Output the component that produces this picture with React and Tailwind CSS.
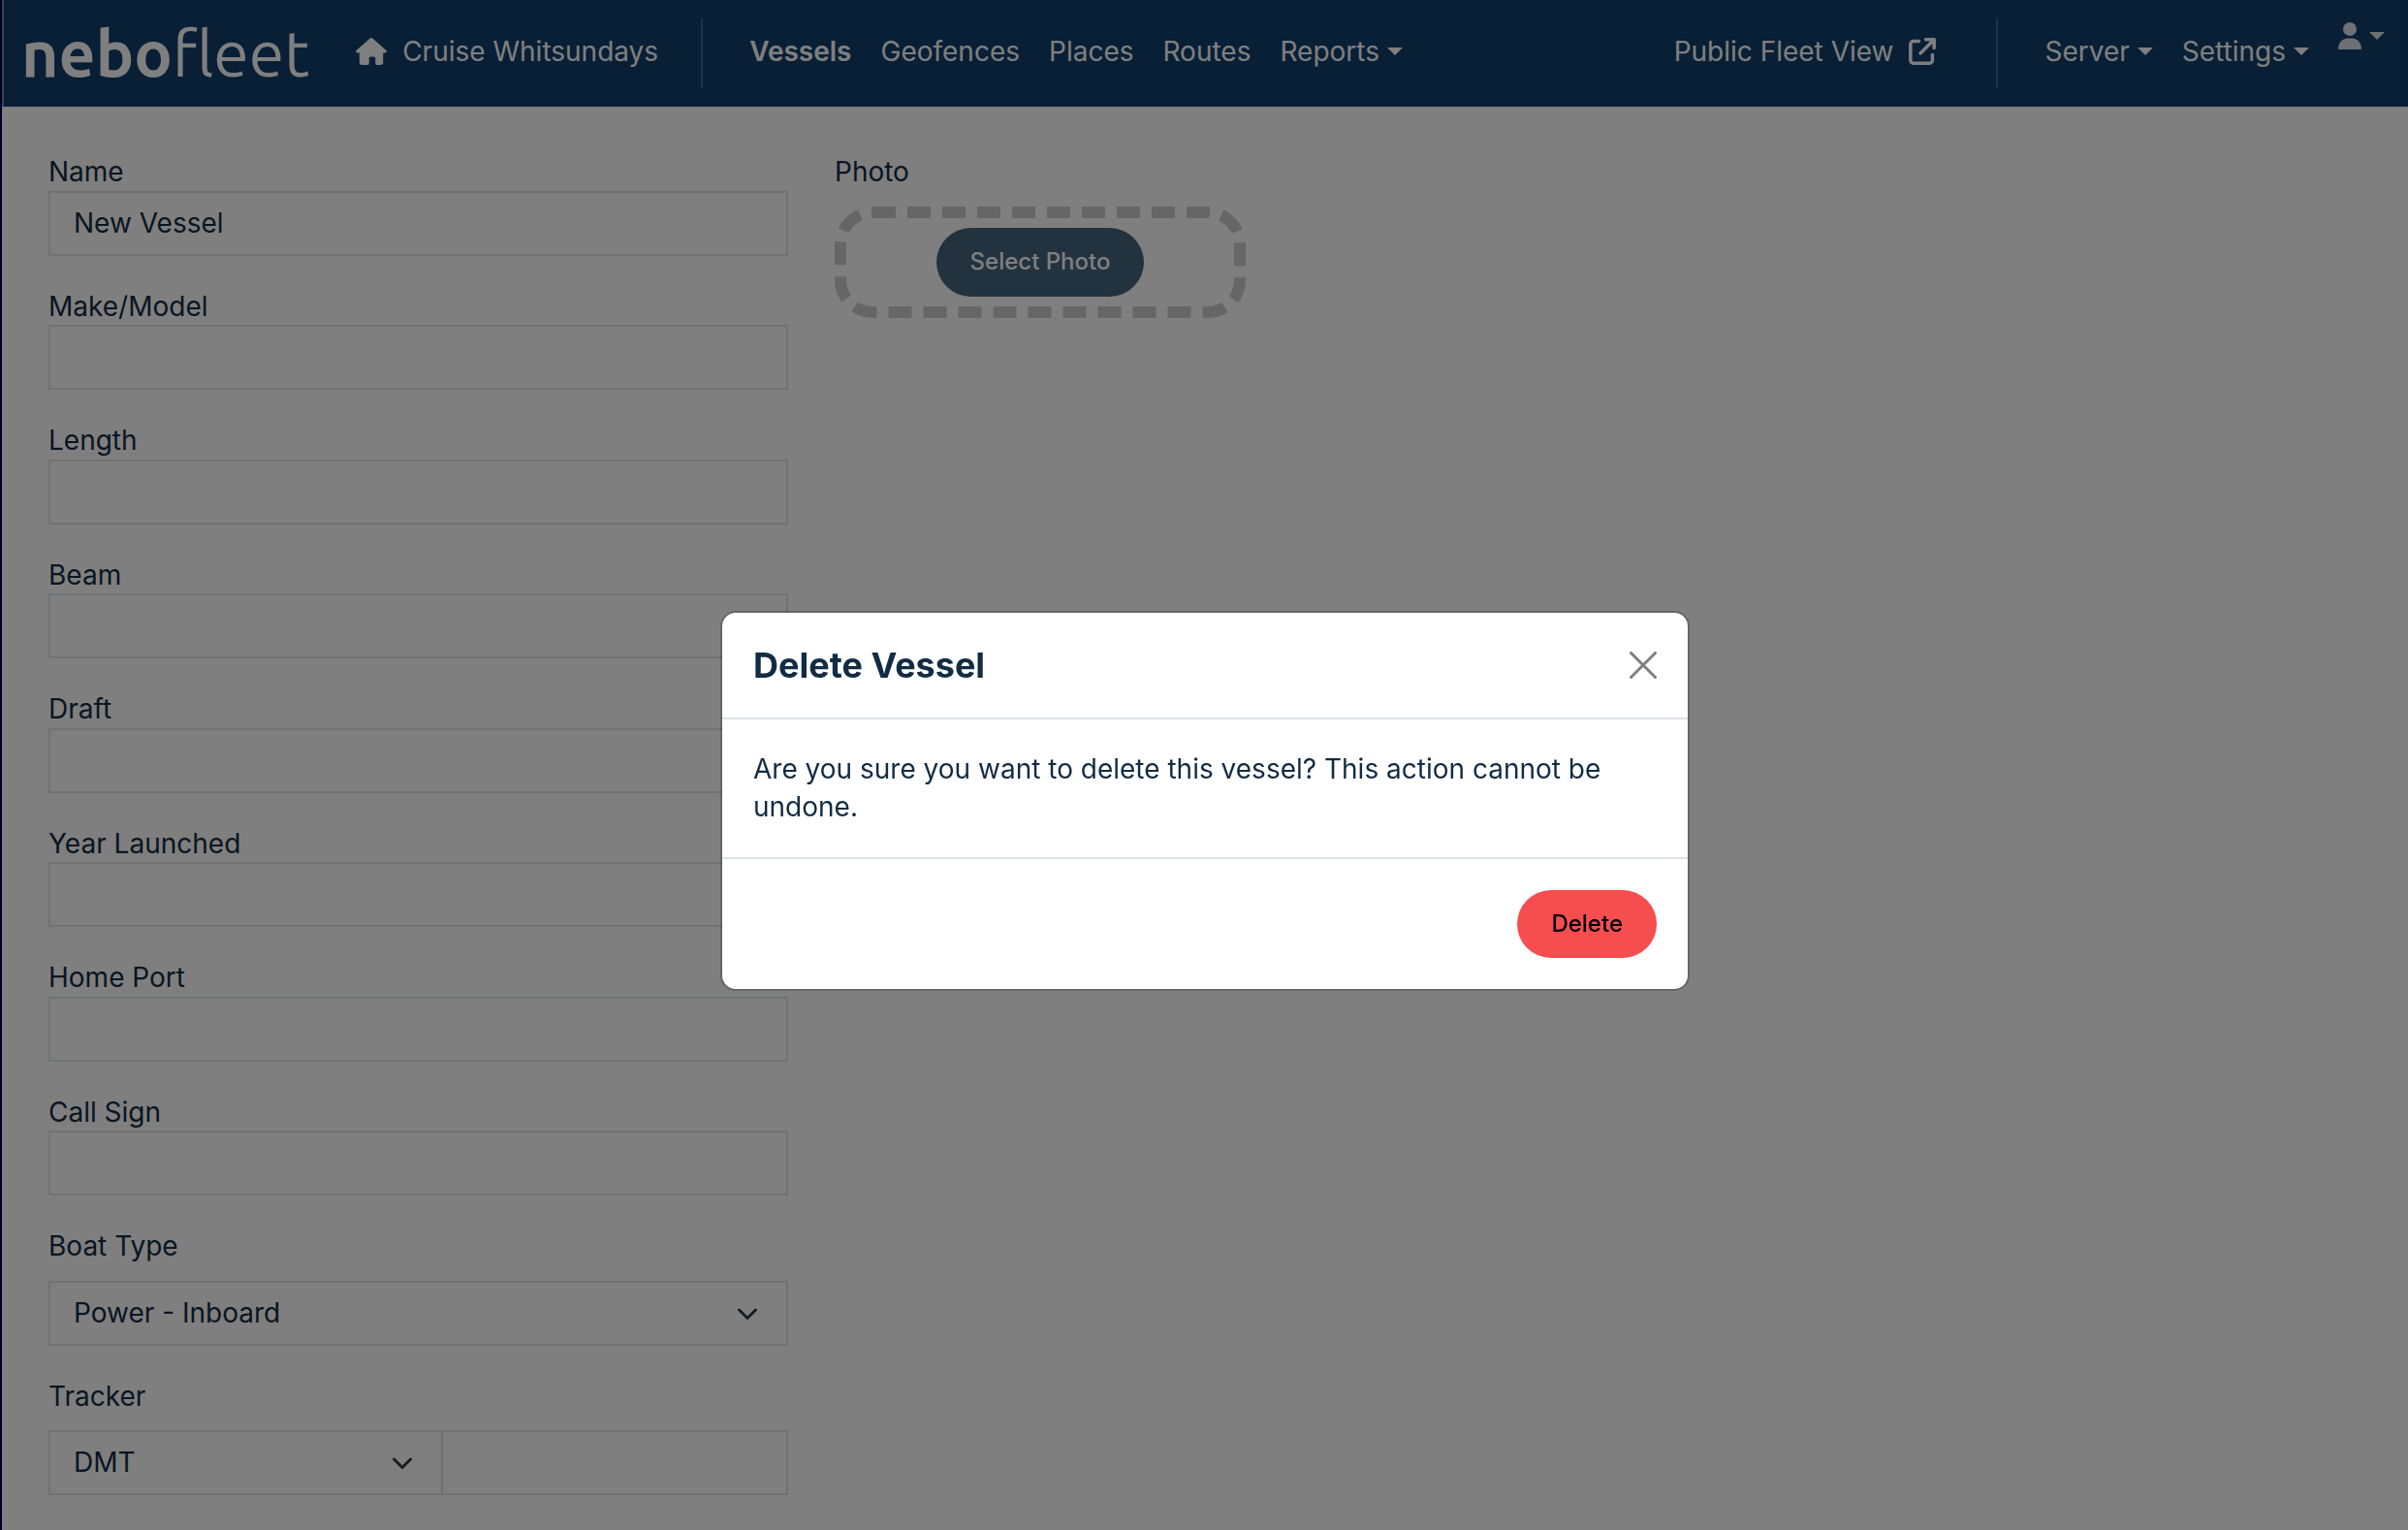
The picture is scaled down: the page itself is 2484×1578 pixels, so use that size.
import React, { useState } from "react";

const TEXT_FIELDS = [
	{ id: "name", label: "Name", value: "New Vessel" },
	{ id: "makeModel", label: "Make/Model", value: "" },
	{ id: "length", label: "Length", value: "" },
	{ id: "beam", label: "Beam", value: "" },
	{ id: "draft", label: "Draft", value: "" },
	{ id: "yearLaunched", label: "Year Launched", value: "" },
	{ id: "homePort", label: "Home Port", value: "" },
	{ id: "callSign", label: "Call Sign", value: "" },
];

const Caret = () => (
	<svg className="w-4 h-2" viewBox="0 0 16 8" fill="currentColor">
		<path d="M0 0h16L8 8z" />
	</svg>
);

const HomeIcon = () => (
	<svg className="w-8 h-7" viewBox="0 0 32 28" fill="currentColor">
		<path d="M14.7.6a2 2 0 0 1 2.6 0L31.4 13c1 .9.4 2.6-1 2.6h-2.200v10.200c0 1.300-1 2.200-2.200 2.200h-4.200c-.9 0-1.500-.7-1.500-1.500v-5.300c0-1-.8-1.800-1.800-1.800h-3c-1 0-1.800.8-1.800 1.800v5.300c0 .8-.7 1.500-1.500 1.500H6c-1.300 0-2.200-1-2.200-2.200V15.600H1.600c-1.400 0-2-1.700-1-2.600z" />
	</svg>
);

const ExternalIcon = () => (
	<svg
		className="w-7 h-7"
		viewBox="0 0 28 28"
		fill="none"
		stroke="currentColor"
		strokeWidth="3.500"
		strokeLinecap="round"
		strokeLinejoin="round"
	>
		<path d="M10.500 3.600H4.800a3 3 0 0 0-3 3v16.600a3 3 0 0 0 3 3h16.600a3 3 0 0 0 3-3V17.500" />
		<path d="M12 16 25.500 2.500M17.500 1.800h8.700v8.700" />
	</svg>
);

const UserIcon = () => (
	<svg className="w-6 h-7" viewBox="0 0 24 28" fill="currentColor">
		<circle cx="12" cy="7" r="7" />
		<path d="M1 28c-.6 0-1-.4-1-1 0-5.800 4.500-10.500 10-10.500h4c5.500 0 10 4.700 10 10.500 0 .6-.4 1-1 1z" />
	</svg>
);

// Top navigation bar
const Navbar = () => (
	<header className="flex items-center h-[110px] pl-[18px] pr-6 border-l-2 border-[#7c86a4] bg-[#113f6d] text-[28px] leading-[40px] text-white">
		<a
			href="#"
			className="font-[Ubuntu,'Noto_Sans',sans-serif] text-[66px] leading-[64px] pb-0.5 text-white"
		>
			<b className="font-bold">nebo</b>
			<span className="font-normal">fleet</span>
		</a>
		<a href="#" className="flex items-center gap-4 ml-12 pb-1">
			<HomeIcon />
			Cruise Whitsundays
		</a>
		<div className="w-0.5 h-[72px] ml-11 bg-white/20" />
		<nav className="flex items-center gap-[30px] ml-12 pb-1">
			<a href="#" className="font-semibold">
				Vessels
			</a>
			<a href="#">Geofences</a>
			<a href="#">Places</a>
			<a href="#">Routes</a>
			<button type="button" className="flex items-center gap-2">
				Reports
				<Caret />
			</button>
		</nav>
		<a href="#" className="flex items-center gap-4 ml-auto pb-1">
			Public Fleet View
			<ExternalIcon />
		</a>
		<div className="w-0.5 h-[72px] ml-[62px] bg-white/20" />
		<div className="flex items-center gap-[30px] ml-12 pb-1">
			<button type="button" className="flex items-center gap-2">
				Server
				<Caret />
			</button>
			<button type="button" className="flex items-center gap-2">
				Settings
				<Caret />
			</button>
			<button
				type="button"
				aria-label="Account"
				className="flex items-center gap-2 mb-8 text-white/85"
			>
				<UserIcon />
				<Caret />
			</button>
		</div>
	</header>
);

const Select = ({ id, value, className = "" }) => (
	<div className={`relative ${className}`}>
		<select
			id={id}
			defaultValue={value}
			className="appearance-none w-full h-[67px] px-6 border-2 border-[#dee2e6] bg-white"
		>
			<option>{value}</option>
		</select>
		<svg
			className="absolute right-8 top-6 w-5 h-5 pointer-events-none"
			viewBox="0 0 20 20"
			fill="none"
			stroke="#343a40"
			strokeWidth="3"
			strokeLinecap="round"
			strokeLinejoin="round"
		>
			<path d="m1.500 6 8.500 8.500L18.500 6" />
		</svg>
	</div>
);

const VesselForm = () => (
	<form className="w-[763px] leading-snug">
		{TEXT_FIELDS.map((field) => (
			<div key={field.id} className="mb-[33px]">
				<label htmlFor={field.id} className="block">
					{field.label}
				</label>
				<input
					id={field.id}
					type="text"
					defaultValue={field.value}
					className="block w-full h-[67px] px-6 border-2 border-[#dee2e6] bg-white"
				/>
			</div>
		))}
		<div className="mb-[33px]">
			<label htmlFor="boatType" className="block mb-4">
				Boat Type
			</label>
			<Select id="boatType" value="Power - Inboard" />
		</div>
		<div>
			<label htmlFor="tracker" className="block mb-4">
				Tracker
			</label>
			<div className="flex">
				<Select id="tracker" value="DMT" className="w-[407px]" />
				<input
					type="text"
					aria-label="Tracker ID"
					className="flex-1 min-w-0 h-[67px] px-6 border-2 border-l-0 border-[#dee2e6] bg-white"
				/>
			</div>
		</div>
	</form>
);

// Dashed drop area with the upload button
const PhotoPicker = () => (
	<section>
		<h2 className="leading-snug">Photo</h2>
		<div className="relative flex justify-center items-center w-[424px] h-[115px] mt-4">
			<svg
				className="absolute inset-0"
				width="424"
				height="115"
				fill="none"
				stroke="#cccccc"
				strokeWidth="12"
				strokeDasharray="24 12"
			>
				<rect x="6" y="6" width="412" height="103" rx="33" />
			</svg>
			<button
				type="button"
				className="relative h-[71px] px-[35px] rounded-full bg-[#44647e] text-[24px] font-medium text-white"
			>
				Select Photo
			</button>
		</div>
	</section>
);

const DeleteModal = ({ onClose }) => (
	<div className="fixed inset-y-0 left-0.5 right-0 z-20 flex justify-center items-center bg-black/50">
		<div
			role="dialog"
			aria-modal="true"
			aria-labelledby="deleteTitle"
			className="w-[1000px] mt-[74px] rounded-2xl border-2 border-black/20 bg-white bg-clip-padding"
		>
			<div className="flex justify-between items-center h-[108px] px-8">
				<h1 id="deleteTitle" className="text-[36px] leading-[46px] font-bold">
					Delete Vessel
				</h1>
				<button type="button" aria-label="Close" onClick={onClose}>
					<svg
						className="w-7 h-7"
						viewBox="0 0 28 28"
						stroke="#7f7f7f"
						strokeWidth="3"
						strokeLinecap="round"
					>
						<path d="m1.500 1.500 25 25M26.500 1.500l-25 25" />
					</svg>
				</button>
			</div>
			<p className="px-8 py-8 border-y-2 border-[#dee2e6] leading-[39px]">
				Are you sure you want to delete this vessel? This action cannot be
				undone.
			</p>
			<div className="flex justify-end p-8">
				<button
					type="button"
					className="h-[70px] px-[35px] rounded-full bg-[#f64e4e] text-[24px] font-medium text-black"
				>
					Delete
				</button>
			</div>
		</div>
	</div>
);

const App = () => {
	const [showDelete, setShowDelete] = useState(true);

	return (
		<div className="h-screen overflow-hidden border-l-2 border-[#00002f] bg-white font-[Inter,sans-serif] text-[28px] text-[#122c44]">
			<Navbar />
			<main className="flex gap-12 px-12 pt-12">
				<VesselForm />
				<PhotoPicker />
			</main>
			{showDelete && <DeleteModal onClose={() => setShowDelete(false)} />}
		</div>
	);
};

export default App;
